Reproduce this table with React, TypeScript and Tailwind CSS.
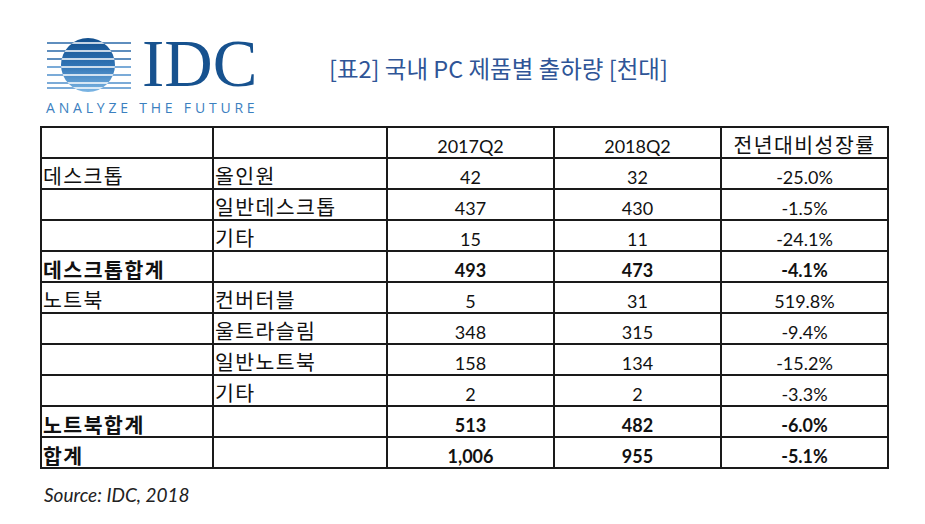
import React from "react";

type Row = { cells: string[]; bold?: boolean };

const rows: Row[] = [
  { cells: ["", "", "2017Q2", "2018Q2", "전년대비성장률"] },
  { cells: ["데스크톱", "올인원", "42", "32", "-25.0%"] },
  { cells: ["", "일반데스크톱", "437", "430", "-1.5%"] },
  { cells: ["", "기타", "15", "11", "-24.1%"] },
  { cells: ["데스크톱합계", "", "493", "473", "-4.1%"], bold: true },
  { cells: ["노트북", "컨버터블", "5", "31", "519.8%"] },
  { cells: ["", "울트라슬림", "348", "315", "-9.4%"] },
  { cells: ["", "일반노트북", "158", "134", "-15.2%"] },
  { cells: ["", "기타", "2", "2", "-3.3%"] },
  { cells: ["노트북합계", "", "513", "482", "-6.0%"], bold: true },
  { cells: ["합계", "", "1,006", "955", "-5.1%"], bold: true },
];

const KR = { fontFamily: '"Noto Sans CJK KR", "Noto Sans", sans-serif' };
const NUM = { fontFamily: 'Lato, "Noto Sans CJK KR", sans-serif' };

function isKorean(s: string) {
  return /[\uac00-\ud7a3]/.test(s);
}

function Globe() {
  const lines = [6, 14, 22, 30, 38, 46, 51];
  return (
    <svg width="86" height="56" viewBox="0 0 86 56" className="shrink-0">
      <defs>
        <linearGradient id="gg" x1="0" y1="0" x2="0" y2="1">
          <stop offset="0" stopColor="#134f8d" />
          <stop offset="0.5" stopColor="#2f73b4" />
          <stop offset="1" stopColor="#7db6e4" />
        </linearGradient>
        <clipPath id="gc">
          <circle cx="42" cy="28" r="27" />
        </clipPath>
      </defs>
      {lines.map((y, i) => (
        <line
          key={i}
          x1="1"
          x2="85"
          y1={y}
          y2={y}
          stroke={i < 3 ? "#2a68a8" : "#4f8fcb"}
          strokeWidth="1.4"
        />
      ))}
      <circle cx="42" cy="28" r="27" fill="url(#gg)" />
      <g clipPath="url(#gc)">
        {lines.map((y, i) => (
          <line key={i} x1="0" x2="86" y1={y} y2={y} stroke="#ffffff" strokeWidth="1.6" />
        ))}
      </g>
    </svg>
  );
}

export default function App() {
  return (
    <div className="w-[925px] h-[524px] bg-white overflow-hidden text-[#111111]">
      <div className="flex h-[126px]">
        <div className="w-[329px] shrink-0 pl-[46px] pt-[37px] flex flex-col">
          <div className="flex items-start h-[56px]">
            <Globe />
            <div
              className="ml-[10px] text-[67px] leading-[52px] text-[#17528f]"
              style={{ fontFamily: '"Liberation Serif", serif' }}
            >
              IDC
            </div>
          </div>
          <div
            className="mt-[8px] text-[14px] leading-none tracking-[3.8px] text-[#3b80bf] whitespace-nowrap"
            style={{ fontFamily: '"Open Sans", sans-serif' }}
          >
            ANALYZE THE FUTURE
          </div>
        </div>
        <div
          className="mt-[57px] text-[23.5px] leading-none text-[#2f5597] whitespace-nowrap"
          style={KR}
        >
          [표2] 국내 PC 제품별 출하량 [천대]
        </div>
      </div>

      <div className="ml-[40px] w-fit grid grid-cols-[170px_172px_165px_165px_165px] gap-[2px] p-[2px] bg-[#1a1a1a]">
        {rows.map((r, ri) =>
          r.cells.map((c, ci) => {
            const kr = isKorean(c);
            const align = ci < 2 ? "justify-start pl-[1px]" : "justify-center";
            const weight = r.bold ? "font-bold" : "font-normal";
            const size = kr
              ? r.bold
                ? "text-[20.5px] leading-none tracking-[1.5px] pb-[2px]"
                : "text-[20.5px] leading-none tracking-[1.4px] pb-[3px]"
              : "text-[18px] leading-none pb-[2px]";
            return (
              <div
                key={`${ri}-${ci}`}
                className={`bg-white h-[29px] flex items-end whitespace-nowrap ${align} ${weight} ${size}`}
                style={kr ? KR : NUM}
              >
                {c}
              </div>
            );
          })
        )}
      </div>

      <div
        className="ml-[44px] mt-[16px] text-[19px] leading-none italic text-[#222222] whitespace-nowrap"
        style={{ fontFamily: 'Lato, "Liberation Sans", sans-serif' }}
      >
        Source: IDC, 2018
      </div>
    </div>
  );
}
